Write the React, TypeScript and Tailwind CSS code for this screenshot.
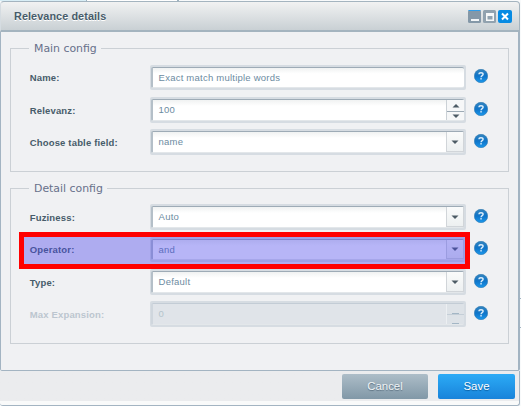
import React from "react";

type Kind = "text" | "spinner" | "select";

interface FieldProps {
  label: string;
  value: string;
  kind: Kind;
  disabled?: boolean;
  short?: boolean;
}

function HelpIcon() {
  return (
    <svg className="h-[14px] w-[14px] shrink-0" viewBox="0 0 14 14" aria-label="Help">
      <defs>
        <linearGradient id="help" x1="0" y1="0" x2="0" y2="1">
          <stop offset="0" stopColor="#3585be" />
          <stop offset="0.5" stopColor="#0f74c8" />
          <stop offset="1" stopColor="#1b98ec" />
        </linearGradient>
      </defs>
      <circle cx="7" cy="7" r="6.7" fill="url(#help)" stroke="#2f79b0" strokeWidth="0.6" />
      <path d="M5 5.3C5 4.2 5.8 3.7 7 3.7s2.1.6 2.1 1.6c0 1.4-2 1.3-2 2.9" fill="none" stroke="#dceefb" strokeWidth="1.4" />
      <rect x="6.3" y="9.1" width="1.5" height="1.4" fill="#dceefb" />
    </svg>
  );
}

function Arrow({ up }: { up?: boolean }) {
  return (
    <svg className="h-[4px] w-[8px]" viewBox="0 0 8 4">
      <path d={up ? "M0.5 3.5 4 0l3.5 3.5z" : "M0.5 0.5h7L4 4z"} fill="#4c5b65" />
    </svg>
  );
}

function Spinner({ disabled }: { disabled?: boolean }) {
  if (disabled) {
    return (
      <div className="flex w-[18px] flex-col border-l border-[#eceff2] bg-[#dde2e7]">
        <div className="flex h-[11px] items-end justify-center border-b border-[#c4ced7]">
          <span className="h-px w-[7px] bg-[#a3b6c5]" />
        </div>
        <div className="flex flex-1 items-end justify-center">
          <span className="h-px w-[7px] bg-[#a3b6c5]" />
        </div>
      </div>
    );
  }
  return (
    <div className="flex w-[18px] flex-col border-l border-[#cbd1d6] bg-[#f6f7f8]">
      <div className="flex h-[12px] items-center justify-center border-b border-[#9daab5] pt-px"><Arrow up /></div>
      <div className="flex flex-1 items-center justify-center"><Arrow /></div>
    </div>
  );
}

function Field({ label, value, kind, disabled, short }: FieldProps) {
  return (
    <div className="flex h-[26px]">
      <div className={`w-[121px] shrink-0 pl-[0.7px] text-[9.5px] leading-[12px] font-bold tracking-[0.17px] whitespace-nowrap ${short ? "pt-[7px]" : "pt-[8px]"} ${disabled ? "text-[#bcc6cf]" : "text-[#475c6a]"}`}>
        {label}
      </div>
      <div className={`w-[316px] shrink-0 rounded-[2px] bg-[#d6dce2] p-[2px] pl-px ${short ? "h-[25px]" : "h-[26px]"}`}>
        <div className={`flex h-full rounded-[2px] border border-l-2 border-r-0 border-b-[#e3e7ea] ${disabled ? "border-[#c3ccd5] border-l-[#cfd6dd] bg-[#e0e4e9]" : "border-[#9eabb6] border-l-[#b4bfc8] bg-linear-to-b from-[#f0f2f2] via-[#ffffff] via-30% to-[#ffffff]"}`}>
          <div className={`flex-1 pl-[5.6px] text-[9.5px] leading-[12px] tracking-[0.23px] whitespace-nowrap pt-[4px] ${disabled ? "text-[#b5c4cc]" : "text-[#6c8ba1]"}`}>
            {value}
          </div>
          {kind === "spinner" && <Spinner disabled={disabled} />}
          {kind === "select" && (
            <div className="flex w-[18px] items-center justify-center border-r border-b border-l border-[#d1d5d9] bg-linear-to-b from-[#fafbfb] to-[#edf0f1]">
              <Arrow />
            </div>
          )}
        </div>
      </div>
      <div className={`ml-[8px] ${short ? "mt-[4px]" : "mt-[5px]"}`}><HelpIcon /></div>
    </div>
  );
}

function Group({ title, titleClass, className, children }: { title: string; titleClass: string; className: string; children: React.ReactNode }) {
  return (
    <section className={`ml-[9px] flex w-[499px] flex-col ${className}`}>
      <div className="flex h-[13px] items-start">
        <div className="mt-[6px] h-[7px] w-[19px] border-t border-l border-[#cbd0d5]" />
        <h2 className={`shrink-0 pl-[5px] font-['DejaVu_Sans',sans-serif] text-[10.9px] leading-[13px] whitespace-nowrap text-[#67708a] ${titleClass}`}>{title}</h2>
        <div className="mt-[6px] h-[7px] flex-1 border-t border-r border-[#cbd0d5]" />
      </div>
      <div className="flex-1 border-r border-b border-l border-[#cbd0d5] pl-[18px]">{children}</div>
    </section>
  );
}

export default function App() {
  return (
    <div className="h-[406px] w-[521px] overflow-hidden bg-[#f8fafb] font-['Liberation_Sans',Arial,sans-serif]">
      <div className="flex h-px">
        <div className="w-[87px] border-r border-[#9eb2bf] bg-[#d8eef6]" />
        <div className="w-[92px] border-r-2 border-[#9eb2bf] bg-white" />
      </div>
      <div className="flex">
        <div className="flex h-[405px] w-[520px] shrink-0 flex-col">
          <header className="flex h-[31px] shrink-0 items-start rounded-t-[4px] border-t border-r border-b-2 border-l border-[#a4b4bf] border-l-[#d5dce1] bg-linear-to-b from-[#f1f2f2] to-[#c9d0d4] pr-[7px] pl-[13px]">
            <h1 className="flex-1 pt-[7px] text-[10.8px] leading-[14px] font-bold tracking-[0.1px] text-[#475c6a] [text-shadow:0_1px_0_#fff]">Relevance details</h1>
            <div className="flex gap-[2px] pt-[8px]">
              <svg className="h-[13px] w-[13px]" viewBox="0 0 13 13">
                <rect width="13" height="13" rx="1.5" fill="#8498a8" />
                <rect x="0.5" width="12" height="1" fill="#309ce8" />
                <rect x="3" y="9" width="8" height="2" fill="#f3f6f8" />
              </svg>
              <svg className="h-[13px] w-[13px]" viewBox="0 0 13 13">
                <rect width="13" height="13" rx="1.5" fill="#91a2af" />
                <path d="M3 3h8v8H3zM4.5 6v3.5h5V6z" fill="#f6f8f9" fillRule="evenodd" />
              </svg>
              <svg className="h-[13px] w-[14px]" viewBox="0 0 14 13">
                <rect width="14" height="13" rx="2" fill="#078be3" />
                <path d="M4 3.5l6 6M10 3.5l-6 6" stroke="#fff" strokeWidth="2" />
              </svg>
            </div>
          </header>
          <main className="h-[339px] shrink-0 rounded-b-[2px] border-r-2 border-b border-l border-[#a3b4c2] bg-[#f0f1f3] pt-[10px]">
            <Group title="Main config" titleClass="w-[72px]" className="h-[130px]">
              <div className="flex flex-col gap-[6px] pt-[10px]">
                <Field label="Name:" value="Exact match multiple words" kind="text" short />
                <Field label="Relevanz:" value="100" kind="spinner" />
                <Field label="Choose table field:" value="name" kind="select" />
              </div>
            </Group>
            <Group title="Detail config" titleClass="w-[78px]" className="mt-[10px] h-[162px]">
              <div className="flex flex-col gap-[6px] pt-[9px]">
                <Field label="Fuziness:" value="Auto" kind="select" />
                <div className="relative mt-px">
                  <Field label="Operator:" value="and" kind="select" short />
                  <div className="absolute top-[-5px] left-[-10px] h-[37px] w-[451px] border-[5px] border-[#ff0000] bg-[rgba(75,70,235,0.4)]" />
                </div>
                <Field label="Type:" value="Default" kind="select" />
                <Field label="Max Expansion:" value="0" kind="spinner" disabled />
              </div>
            </Group>
          </main>
          <footer className="flex h-[35px] shrink-0 items-start justify-end gap-[10px] rounded-b-[3px] border-r border-b border-[#a3b4c2] bg-linear-to-b from-[#ebecee] from-88% to-[#f9fafa] to-89% pt-[3px] pr-[4px]">
            <button className="flex h-[25px] w-[86px] justify-center rounded-[2px] bg-linear-to-b from-[#adbdc8] to-[#8198a7] text-[11.4px] leading-[25px] text-[#eff3f5] [text-shadow:0_1px_1px_#5b7080]">Cancel</button>
            <button className="flex h-[25px] w-[77px] justify-center rounded-[2px] bg-linear-to-b from-[#2cabf6] to-[#1983da] text-[11.4px] leading-[25px] text-white [text-shadow:0_1px_1px_#0b5da0]">Save</button>
          </footer>
        </div>
        <div className="mt-[297px] h-[30px] w-px border-y border-[#a3b4c2]" />
      </div>
    </div>
  );
}
